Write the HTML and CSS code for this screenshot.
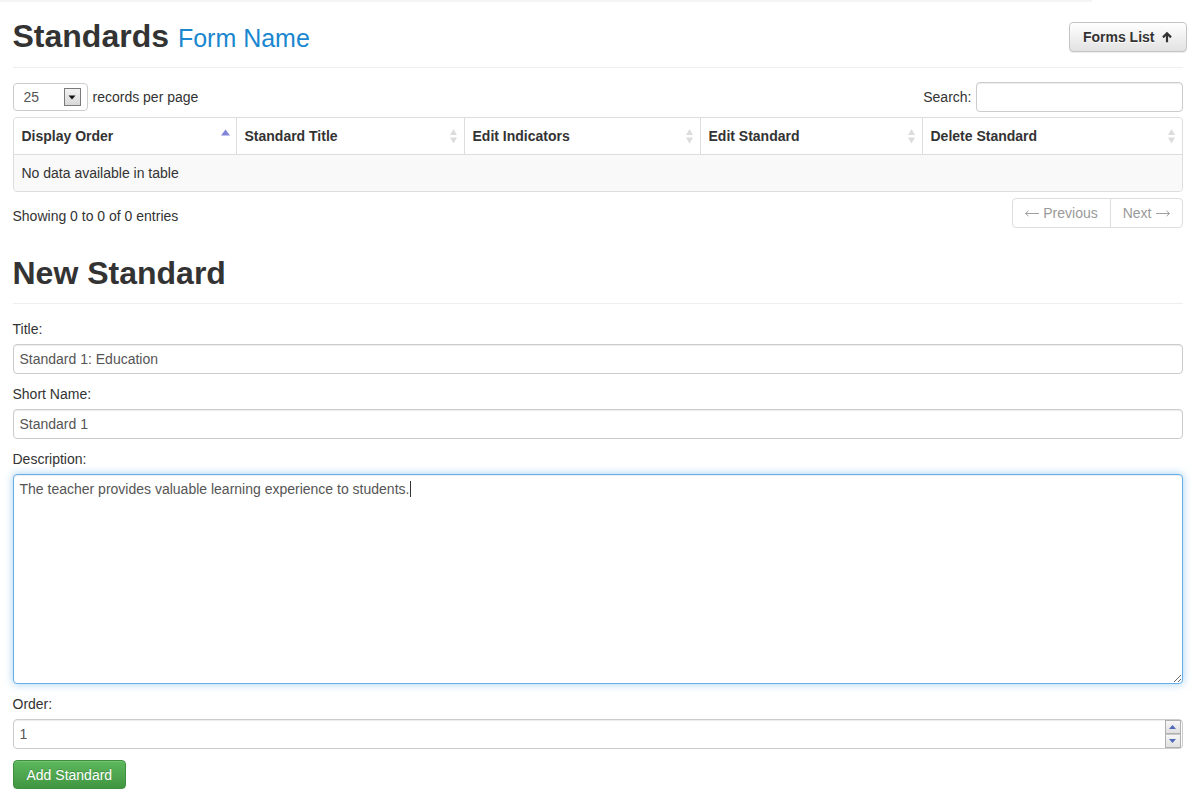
FILE: index.html
```html
<!DOCTYPE html>
<html lang="en">
<head>
<meta charset="utf-8">
<title>Standards</title>
<link rel="stylesheet" href="styles.css">
</head>
<body>
<div class="topline"></div>
<div class="page">
  <header class="head">
    <h1 class="title">Standards <small class="subtitle">Form Name</small></h1>
    <button class="btn btn-default" type="button">Forms List
      <svg class="icon-up" width="12" height="12" viewBox="0 0 12 12"><path d="M6 0.8 L1.2 5.6 L2.8 7.2 L4.9 5.1 V11.2 H7.1 V5.1 L9.2 7.2 L10.8 5.6 Z" fill="#333"/></svg>
    </button>
  </header>

  <div class="dt-controls">
    <div class="length">
      <span class="select"><span class="select-value">25</span><span class="select-arrow"><svg width="8" height="5" viewBox="0 0 8 5"><path d="M0.5 0.5 H7.5 L4 4.5 Z" fill="#111"/></svg></span></span>
      <span class="length-text">records per page</span>
    </div>
    <label class="search">Search: <input class="search-input" type="text"></label>
  </div>

  <table class="dt">
    <colgroup>
      <col class="c1"><col class="c2"><col class="c3"><col class="c4"><col class="c5">
    </colgroup>
    <thead>
      <tr>
        <th><div class="th-inner"><span>Display Order</span><svg class="sort" width="9" height="17" viewBox="0 0 9 17"><path d="M0 7.5 L4.5 1.5 L9 7.5 Z" fill="#8286da"/></svg></div></th>
        <th><div class="th-inner"><span>Standard Title</span><svg class="sort" width="9" height="17" viewBox="0 0 9 17"><path d="M1 7 L4.5 1 L8 7 Z M1 9.5 L4.5 15.5 L8 9.5 Z" fill="#dcdcdc"/></svg></div></th>
        <th><div class="th-inner"><span>Edit Indicators</span><svg class="sort" width="9" height="17" viewBox="0 0 9 17"><path d="M1 7 L4.5 1 L8 7 Z M1 9.5 L4.5 15.5 L8 9.5 Z" fill="#dcdcdc"/></svg></div></th>
        <th><div class="th-inner"><span>Edit Standard</span><svg class="sort" width="9" height="17" viewBox="0 0 9 17"><path d="M1 7 L4.5 1 L8 7 Z M1 9.5 L4.5 15.5 L8 9.5 Z" fill="#dcdcdc"/></svg></div></th>
        <th><div class="th-inner"><span>Delete Standard</span><svg class="sort" width="9" height="17" viewBox="0 0 9 17"><path d="M1 7 L4.5 1 L8 7 Z M1 9.5 L4.5 15.5 L8 9.5 Z" fill="#dcdcdc"/></svg></div></th>
      </tr>
    </thead>
    <tbody>
      <tr><td colspan="5" class="empty">No data available in table</td></tr>
    </tbody>
  </table>

  <div class="dt-footer">
    <div class="info">Showing 0 to 0 of 0 entries</div>
    <ul class="pager">
      <li class="prev"><svg class="arr" width="14" height="7" viewBox="0 0 14 7"><path d="M0.5 3.5 H14 M0.5 3.5 L3.5 0.8 M0.5 3.5 L3.5 6.2" stroke="#a0a0a0" stroke-width="1" fill="none"/></svg>Previous</li>
      <li class="next">Next<svg class="arr" width="14" height="7" viewBox="0 0 14 7"><path d="M0 3.5 H13.5 M13.5 3.5 L10.5 0.8 M13.5 3.5 L10.5 6.2" stroke="#a0a0a0" stroke-width="1" fill="none"/></svg></li>
    </ul>
  </div>

  <h2 class="section-title">New Standard</h2>

  <form class="form">
    <div class="group">
      <label class="lbl" for="title">Title:</label>
      <input class="control" id="title" type="text" value="Standard 1: Education">
    </div>
    <div class="group">
      <label class="lbl" for="short">Short Name:</label>
      <input class="control" id="short" type="text" value="Standard 1">
    </div>
    <div class="group">
      <label class="lbl" for="desc">Description:</label>
      <div class="ta-wrap">
        <textarea class="control textarea focused" id="desc">The teacher provides valuable learning experience to students.</textarea>
        <span class="caret"></span>
      </div>
    </div>
    <div class="group">
      <label class="lbl" for="order">Order:</label>
      <div class="number">
        <input class="number-input" id="order" type="text" value="1">
        <span class="spinner">
          <span class="spin"><svg width="7" height="4" viewBox="0 0 7 4"><path d="M0 4 L3.5 0 L7 4 Z" fill="#5068b8"/></svg></span>
          <span class="spin"><svg width="7" height="4" viewBox="0 0 7 4"><path d="M0 0 L3.5 4 L7 0 Z" fill="#5068b8"/></svg></span>
        </span>
      </div>
    </div>
    <button class="btn btn-success" type="button">Add Standard</button>
  </form>
</div>
</body>
</html>
```

FILE: styles.css
```css
* { box-sizing: border-box; }

html, body {
  margin: 0;
  padding: 0;
  background: #fff;
}

body {
  font-family: "Liberation Sans", Arial, sans-serif;
  font-size: 14px;
  line-height: 20px;
  color: #333;
}

.topline {
  width: 1092px;
  height: 2px;
  background: #f4f4f4;
}

.page {
  width: 1170px;
  margin: 0 auto;
}

/* header */
.head {
  display: flex;
  justify-content: space-between;
  align-items: center;
  padding: 17px 0 13px;
  border-bottom: 1px solid #eee;
}

.title {
  margin: 0;
  font-size: 32px;
  line-height: 35px;
  font-weight: bold;
  color: #333;
}

.subtitle {
  font-size: 25px;
  line-height: 25px;
  font-weight: normal;
  color: #1b87d0;
}

.btn {
  font-family: "Liberation Sans", Arial, sans-serif;
  font-size: 14px;
  line-height: 20px;
  border-radius: 4px;
  cursor: pointer;
}

.btn-default {
  display: flex;
  align-items: center;
  gap: 6px;
  height: 30px;
  margin-right: -4px;
  padding: 0 13px;
  font-weight: bold;
  color: #333;
  text-shadow: 0 1px 0 #fff;
  background: linear-gradient(to bottom, #fff 0%, #e2e2e2 100%);
  border: 1px solid #c4c4c4;
  box-shadow: inset 0 1px 0 rgba(255,255,255,.15), 0 1px 1px rgba(0,0,0,.075);
}

.icon-up { display: block; }

/* datatable controls */
.dt-controls {
  display: flex;
  justify-content: space-between;
  align-items: center;
  margin-top: 14px;
  height: 30px;
}

.length {
  display: flex;
  align-items: center;
  gap: 5px;
}

.select {
  display: flex;
  align-items: center;
  justify-content: space-between;
  width: 75px;
  height: 28px;
  padding: 0 6px 0 10px;
  border: 1px solid #ccc;
  border-radius: 4px;
  color: #555;
  background: #fff;
}

.select-arrow {
  display: flex;
  align-items: center;
  justify-content: center;
  width: 17px;
  height: 18px;
  border: 1px solid #7a7a7a;
  background: linear-gradient(to bottom, #f2f2f2, #d9d9d9);
}

.select-arrow svg { display: block; }

.search {
  display: flex;
  align-items: center;
  gap: 4px;
}

.search-input {
  width: 207px;
  height: 30px;
  border: 1px solid #ccc;
  border-radius: 4px;
  box-shadow: inset 0 1px 1px rgba(0,0,0,.075);
  padding: 0 6px;
  font: inherit;
}

/* table */
.dt {
  width: 1170px;
  margin-top: 5px;
  table-layout: fixed;
  border-collapse: separate;
  border-spacing: 0;
  border: 1px solid #ddd;
  border-radius: 4px;
}

.c1 { width: 222px; }
.c2 { width: 228px; }
.c3 { width: 236px; }
.c4 { width: 222px; }
.c5 { width: auto; }

.dt th {
  padding: 8px 6px 8px 8px;
  text-align: left;
  font-weight: bold;
  border-bottom: 1px solid #ddd;
  border-left: 1px solid #ddd;
  background: #fff;
}

.dt th:first-child { border-left: 0; border-top-left-radius: 4px; }
.dt th:last-child { border-top-right-radius: 4px; }

.th-inner {
  display: flex;
  justify-content: space-between;
  align-items: center;
}

.sort { display: block; }

.dt td.empty {
  padding: 8px;
  background: #f9f9f9;
  border-radius: 0 0 4px 4px;
}

/* footer */
.dt-footer {
  display: flex;
  justify-content: space-between;
  align-items: flex-start;
  margin-top: 6px;
}

.info {
  padding-top: 8px;
}

.pager {
  display: flex;
  margin: 0;
  padding: 0;
  list-style: none;
  border: 1px solid #ddd;
  border-radius: 4px;
}

.pager li {
  display: flex;
  align-items: center;
  gap: 4px;
  padding: 4px 12px;
  line-height: 20px;
  color: #999;
}

.pager .arr { display: block; margin-top: 1px; }

.pager li + li {
  border-left: 1px solid #ddd;
}

/* section */
.section-title {
  margin: 28px 0 0;
  padding-bottom: 12px;
  border-bottom: 1px solid #eee;
  font-size: 32px;
  line-height: 35px;
  font-weight: bold;
  color: #333;
}

.form {
  padding-top: 15px;
}

.group {
  margin-bottom: 10px;
}

.lbl {
  display: block;
  margin-bottom: 5px;
  font-weight: normal;
  color: #333;
}

.control {
  display: block;
  width: 100%;
  height: 30px;
  padding: 0 6px;
  font-family: "Liberation Sans", Arial, sans-serif;
  font-size: 14px;
  color: #555;
  background: #fff;
  border: 1px solid #ccc;
  border-radius: 4px;
  box-shadow: inset 0 1px 1px rgba(0,0,0,.075);
  outline: none;
}

.ta-wrap {
  position: relative;
}

.textarea {
  height: 210px;
  padding: 4px 6px;
  line-height: 20px;
  resize: vertical;
}

.textarea.focused {
  border-color: #66afe9;
  box-shadow: inset 0 1px 1px rgba(0,0,0,.075), 0 0 8px rgba(102,175,233,.6);
}

.caret {
  position: absolute;
  left: 397px;
  top: 7px;
  width: 1px;
  height: 16px;
  background: #333;
}

.number {
  display: flex;
  align-items: stretch;
  height: 30px;
  border: 1px solid #ccc;
  border-radius: 4px;
  box-shadow: inset 0 1px 1px rgba(0,0,0,.075);
  background: #fff;
}

.number-input {
  flex: 1;
  border: 0;
  background: transparent;
  padding: 0 6px;
  font-family: "Liberation Sans", Arial, sans-serif;
  font-size: 14px;
  color: #555;
  outline: none;
}

.spinner {
  display: flex;
  flex-direction: column;
  width: 16px;
  margin-right: 1px;
}

.spin {
  flex: 1;
  display: flex;
  align-items: center;
  justify-content: center;
  border: 1px solid #b0b0b0;
  background: linear-gradient(to bottom, #f6f6f6, #e0e0e0);
}

.spin + .spin { border-top: 1px solid #c8c8c8; }

.spin svg { display: block; }

.btn-success {
  margin-top: 1px;
  height: 29px;
  padding: 0 13px;
  color: #fff;
  font-weight: normal;
  text-shadow: 0 -1px 0 rgba(0,0,0,.2);
  background: linear-gradient(to bottom, #5cb85c 0%, #419641 100%);
  border: 1px solid #3e8f3e;
  box-shadow: inset 0 1px 0 rgba(255,255,255,.15), 0 1px 1px rgba(0,0,0,.075);
}
```
